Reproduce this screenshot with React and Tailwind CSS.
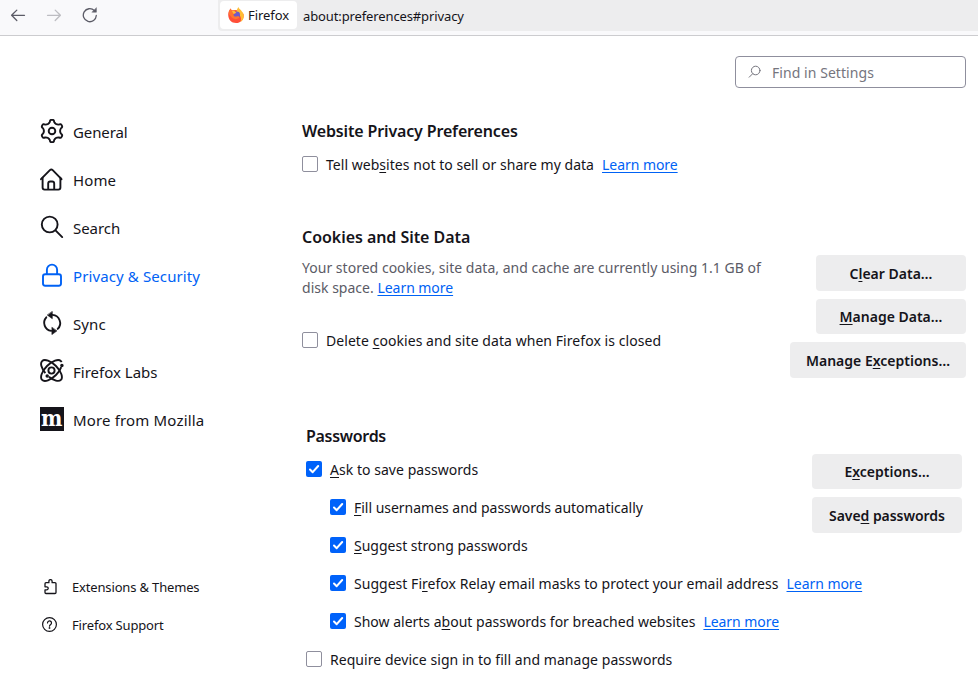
import React from "react";
import { clsx } from "clsx";

const stroke = {
  fill: "none",
  stroke: "currentColor",
  strokeLinecap: "round",
  strokeLinejoin: "round",
};

// Outline of a cog with six rounded teeth around (12, 12)
const point = (r, deg) => {
  const a = (deg * Math.PI) / 180;
  return `${(12 + r * Math.cos(a)).toFixed(2)} ${(12 + r * Math.sin(a)).toFixed(2)}`;
};
const gearPath =
  [-90, -30, 30, 90, 150, 210]
    .map(
      (a, i) =>
        `${i ? "L" : "M"}${point(9.4, a - 13)} Q${point(11.6, a - 11)} ${point(11.2, a)} Q${point(11.6, a + 11)} ${point(9.4, a + 13)} C${point(8, a + 22)} ${point(8, a + 38)} ${point(9.4, a + 47)}`
    )
    .join(" ") + "Z";

// Sidebar icons, all on a 24px grid
const GearIcon = () => (
  <svg width="24" height="24" viewBox="0 0 24 24" {...stroke} strokeWidth="1.9">
    <circle cx="12" cy="12" r="3.3" />
    <path d={gearPath} />
  </svg>
);

const HomeIcon = () => (
  <svg width="24" height="24" viewBox="0 0 24 24" {...stroke} strokeWidth="1.9">
    <path d="M1 12.2 9.900 3.100a2 2 0 0 1 2.800 0L21.500 12.200" />
    <path d="M2.600 10.800v9.800A2 2 0 0 0 4.600 22.600h13.800a2 2 0 0 0 2-2V10.800" />
    <path d="M8.200 22v-5.500a2 2 0 0 1 2-2h2a2 2 0 0 1 2 2v5.500" />
  </svg>
);

const SearchIcon = () => (
  <svg width="24" height="24" viewBox="0 0 24 24" {...stroke} strokeWidth="1.9">
    <circle cx="9.700" cy="9.500" r="7.900" />
    <path d="m15.500 15.400 6.700 6.700" />
  </svg>
);

const LockIcon = () => (
  <svg width="24" height="24" viewBox="0 0 24 24" {...stroke} strokeWidth="1.9">
    <rect x="3" y="11.200" width="18" height="11.600" rx="2.200" />
    <path d="M6.900 11V6.700a5.100 5.100 0 0 1 10.200 0V11" />
  </svg>
);

const SyncIcon = () => (
  <svg width="24" height="24" viewBox="0 0 24 24" {...stroke} strokeWidth="1.900">
    <path d="M6.300 6.300a8.200 8.200 0 0 0 4.900 13.600M17.700 17.900A8.200 8.200 0 0 0 12.500 3.900" />
    <path d="M12.300.7v7L7.500 4.200zM11.900 16.600v7l4.800-3.500z" fill="currentColor" strokeWidth=".6" />
  </svg>
);

const LabsIcon = () => (
  <svg width="24" height="24" viewBox="0 0 24 24" {...stroke} strokeWidth="1.900">
    <g strokeLinecap="butt">
      <ellipse
        cx="11.500" cy="11.500" rx="13.300" ry="6.300" transform="rotate(-45 11.5 11.500)"
        pathLength="100" strokeDasharray="92 8" strokeDashoffset="-10"
      />
      <ellipse
        cx="11.500" cy="11.500" rx="13.300" ry="6.300" transform="rotate(45 11.5 11.500)"
        pathLength="100" strokeDasharray="92 8" strokeDashoffset="-29"
      />
    </g>
    <circle cx="11.500" cy="11.500" r="3.100" />
    <circle cx="21.900" cy="6.400" r=".8" fill="currentColor" />
    <circle cx="7.200" cy="17" r=".8" fill="currentColor" />
  </svg>
);

const MozillaIcon = () => (
  <span className="flex h-6 w-6 items-center justify-center bg-[#15141a] font-['DejaVu_Serif',serif] text-[22px] leading-none font-bold text-white">
    <span className="-mt-[3px] scale-x-[.92]">m</span>
  </span>
);

const PuzzleIcon = () => (
  <svg width="16" height="16" viewBox="0 0 16 16" {...stroke} strokeWidth="1.300">
    <path d="M3 5v-.300a1 1 0 0 1 1-1h2.900V2.200a1.600 1.600 0 0 1 3.200 0v1.500h2.900a1 1 0 0 1 1 1v8.800a1 1 0 0 1-1 1H4a1 1 0 0 1-1-1v-2.700h1.700a1.500 1.500 0 0 0 0-3H3z" />
  </svg>
);

const HelpIcon = () => (
  <svg width="16" height="16" viewBox="0 0 16 16" {...stroke} strokeWidth="1.200">
    <circle cx="7.500" cy="7.500" r="6.900" />
    <path d="M5.500 5.900a2 2 0 1 1 3.200 1.600c-.8.6-1.200.9-1.200 1.700" />
    <circle cx="7.500" cy="11" r=".3" fill="currentColor" />
  </svg>
);

const FirefoxLogo = () => (
  <svg width="16" height="16" viewBox="0 0 16 16">
    <path d="M.2 7.500C.2 5 1.200 3 2.600 1.500L3.500 3.300 9 3l6.500 4c1 5-2.500 9-7.400 9C3.500 16 .2 12.500.2 7.500z" fill="#ff4f38" />
    <path d="M8.300 4 10.300 0c.5 1.800 2.700 2.600 3.600 4.500 1.300 1.300 2.100 3 1.900 5.200-.3 2.300-1.400 4-3.300 5.200.8-2 .8-4.500-.7-6.500z" fill="#ffbd35" />
    <circle cx="8.700" cy="7.900" r="3.300" fill="#6f59cc" />
    <path d="M1 7.500C.7 5 1.400 3.500 2.600 1.500l1.200 2 2.300.2 2.200 2-2.700 1.300c-.8 1.600.8 3 3 2.500 2-.5 3.400.1 2.400 1.500-2.800 2.300-7.200.8-8.400-1.900z" fill="#ff7530" />
    <path d="M3.800 3.800 6.100 3.700l2.200 2-2.700 1.400z" fill="#ffb938" />
  </svg>
);

const navItems = [
  { label: "General", icon: GearIcon, text: "tracking-[-0.1px]" },
  { label: "Home", icon: HomeIcon, text: "tracking-[0.1px]" },
  { label: "Search", icon: SearchIcon, text: "tracking-[-0.05px]" },
  { label: "Privacy & Security", icon: LockIcon, active: true, text: "tracking-[0.11px]" },
  { label: "Sync", icon: SyncIcon, text: "tracking-[0.1px]" },
  { label: "Firefox Labs", icon: LabsIcon, text: "tracking-[0px]" },
  { label: "More from Mozilla", icon: MozillaIcon, text: "tracking-[0.16px]" },
];

// Underlined access key inside a label
const Key = ({ children }) => (
  <span className="underline decoration-1 underline-offset-2">{children}</span>
);

const Link = ({ className }) => (
  <a
    href="#"
    className={clsx(
      "whitespace-nowrap tracking-[-0.05px] text-[#0062f5] underline decoration-1 underline-offset-2",
      className
    )}
  >
    Learn more
  </a>
);

const Checkbox = ({ checked, children, link, className, text }) => (
  <div className={clsx("flex h-[22px] items-center", className)}>
    <label className="flex items-center whitespace-pre">
      <span
        className={clsx(
          "mr-2 flex h-4 w-4 shrink-0 items-center justify-center rounded-[2px]",
          checked ? "bg-[#0062fa] text-white" : "border border-[#8f8f9d] bg-white"
        )}
      >
        {checked && (
          <svg width="16" height="16" viewBox="0 0 16 16" {...stroke} strokeWidth="2">
            <path d="m4 8.500 2.700 2.700L12.200 5" />
          </svg>
        )}
      </span>
      <span className={text}>{children}</span>
    </label>
    {link && <Link className="ml-2" />}
  </div>
);

const Button = ({ children, className }) => (
  <button
    className={clsx(
      "flex h-9 items-center justify-center rounded bg-[#ededee] font-semibold whitespace-pre",
      className
    )}
  >
    <span>{children}</span>
  </button>
);

const Heading = ({ children, className }) => (
  <h2 className={clsx("text-[16px] leading-[22px] font-semibold", className)}>{children}</h2>
);

const Toolbar = () => (
  <header className="flex h-9 items-start border-b border-[#cccccf] bg-[#f9f9fb]">
    <div className="flex w-[218px] shrink-0 items-center gap-5 pt-[7px] pl-[10px] text-[#5b5b66]">
      <svg width="16" height="16" viewBox="0 0 16 16" {...stroke} strokeWidth="1.300">
        <path d="M14.500 8.300H1.700M6.800 3.100 1.600 8.300l5.200 5.200" />
      </svg>
      <svg className="text-[#bdbdc2]" width="16" height="16" viewBox="0 0 16 16" {...stroke} strokeWidth="1.300">
        <path d="M1.500 8.300h12.800M9.200 3.100l5.200 5.200-5.200 5.200" />
      </svg>
      <svg width="16" height="16" viewBox="0 0 16 16" {...stroke} strokeWidth="1.300">
        <path d="M14.300 8.500a6.500 6.500 0 1 1-2-5" />
        <path d="M14.400 1v4.200h-4.200z" fill="currentColor" strokeWidth=".5" />
      </svg>
    </div>
    <div className="flex h-[31px] flex-1 items-start rounded-bl bg-[#ededee] pl-0.5">
      <div className="mt-px flex h-7 w-[77px] items-center gap-1 rounded bg-white pl-2 text-[13px]">
        <FirefoxLogo />
        <span className="pt-0.5 tracking-[-0.05px]">Firefox</span>
      </div>
      <span className="mt-0.5 ml-1.5 text-[13px] leading-[29px] tracking-[-0.12px]">
        about:preferences#privacy
      </span>
    </div>
  </header>
);

const Sidebar = () => (
  <aside className="flex w-[302px] shrink-0 flex-col pl-10">
    <nav className="mt-[71px]">
      {navItems.map(({ label, icon: Icon, active, text }) => (
        <a
          key={label}
          href="#"
          className={clsx("flex h-12 items-center gap-[9px] text-[15px]", active && "text-[#0062f5]")}
        >
          <span className="flex h-6 w-6">
            <Icon />
          </span>
          <span className={clsx("pt-0.5", text)}>{label}</span>
        </a>
      ))}
    </nav>
    <div className="mt-[125px] pl-0.5 text-[13px]">
      <a href="#" className="flex h-[38px] items-center gap-[14px]">
        <PuzzleIcon />
        <span className="pt-0.5 tracking-[-0.16px]">Extensions &amp; Themes</span>
      </a>
      <a href="#" className="flex h-[38px] items-center gap-[14px]">
        <HelpIcon />
        <span className="pt-0.5 tracking-[-0.16px]">Firefox Support</span>
      </a>
    </div>
  </aside>
);

const App = () => (
  <div className="flex h-[677px] w-[978px] flex-col overflow-hidden bg-white font-['Noto_Sans',sans-serif] text-[14px] text-[#15141a]">
    <Toolbar />
    <div className="flex min-h-0 flex-1">
      <Sidebar />
      <main className="flex w-[664px] flex-col">
        <div className="mt-5 flex h-8 w-[231px] shrink-0 items-center gap-[9px] self-end rounded border border-[#8f8f9d] pl-[11px] text-[#75757e]">
          <svg width="16" height="16" viewBox="0 0 16 16" {...stroke} strokeWidth="1">
            <circle cx="8.700" cy="6.500" r="4.300" />
            <path d="m5.700 9.700-3.500 3.500" />
          </svg>
          <span className="tracking-[0.06px]">Find in Settings</span>
        </div>

        <section className="mt-8">
          <Heading className="tracking-[-0.15px]">Website Privacy Preferences</Heading>
          <Checkbox link className="mt-[11px]" text="tracking-[0.035px]">
            Tell web<Key>s</Key>ites not to sell or share my data
          </Checkbox>
        </section>

        <section className="mt-[51px]">
          <Heading className="tracking-[-0.05px]">Cookies and Site Data</Heading>
          <div className="mt-[7px] flex justify-between">
            <div>
              <p className="mt-[3px] leading-5 tracking-[0.02px] whitespace-nowrap text-[#5b5b66]">
                Your stored cookies, site data, and cache are currently using 1.1 GB of
                <br />
                disk space. <Link />
              </p>
              <Checkbox className="mt-[31px]" text="tracking-[0.06px]">
                Delete <Key>c</Key>ookies and site data when Firefox is closed
              </Checkbox>
            </div>
            <div className="flex flex-col items-end gap-2">
              <Button className="w-[150px]">C<Key>l</Key>ear Data…</Button>
              <Button className="h-[35px] w-[150px]"><Key>M</Key>anage Data…</Button>
              <Button className="w-[176px]">Manage E<Key>x</Key>ceptions…</Button>
            </div>
          </div>
        </section>

        <section className="mt-[47px] px-1">
          <Heading className="tracking-[-0.3px]">Passwords</Heading>
          <div className="mt-[7px] flex">
            {/* w-0 lets the long rows run under the button column */}
            <div className="flex w-0 flex-1 flex-col gap-4 pt-1">
              <Checkbox checked text="tracking-[0.04px]"><Key>A</Key>sk to save passwords</Checkbox>
              <Checkbox checked className="ml-6" text="tracking-[-0.02px]">
                <Key>F</Key>ill usernames and passwords automatically
              </Checkbox>
              <Checkbox checked className="ml-6"><Key>S</Key>uggest strong passwords</Checkbox>
              <Checkbox checked link className="ml-6" text="tracking-[0.03px]">
                Suggest Fi<Key>r</Key>efox Relay email masks to protect your email address
              </Checkbox>
              <Checkbox checked link className="ml-6">
                Show alerts a<Key>b</Key>out passwords for breached websites
              </Checkbox>
              <Checkbox text="tracking-[0.05px]">Require device sign in to fill and manage passwords</Checkbox>
            </div>
            <div className="flex flex-col gap-2">
              <Button className="h-[35px] w-[150px]">E<Key>x</Key>ceptions…</Button>
              <Button className="w-[150px] tracking-[-0.05px]">Save<Key>d</Key> passwords</Button>
            </div>
          </div>
        </section>
      </main>
    </div>
  </div>
);

export default App;
